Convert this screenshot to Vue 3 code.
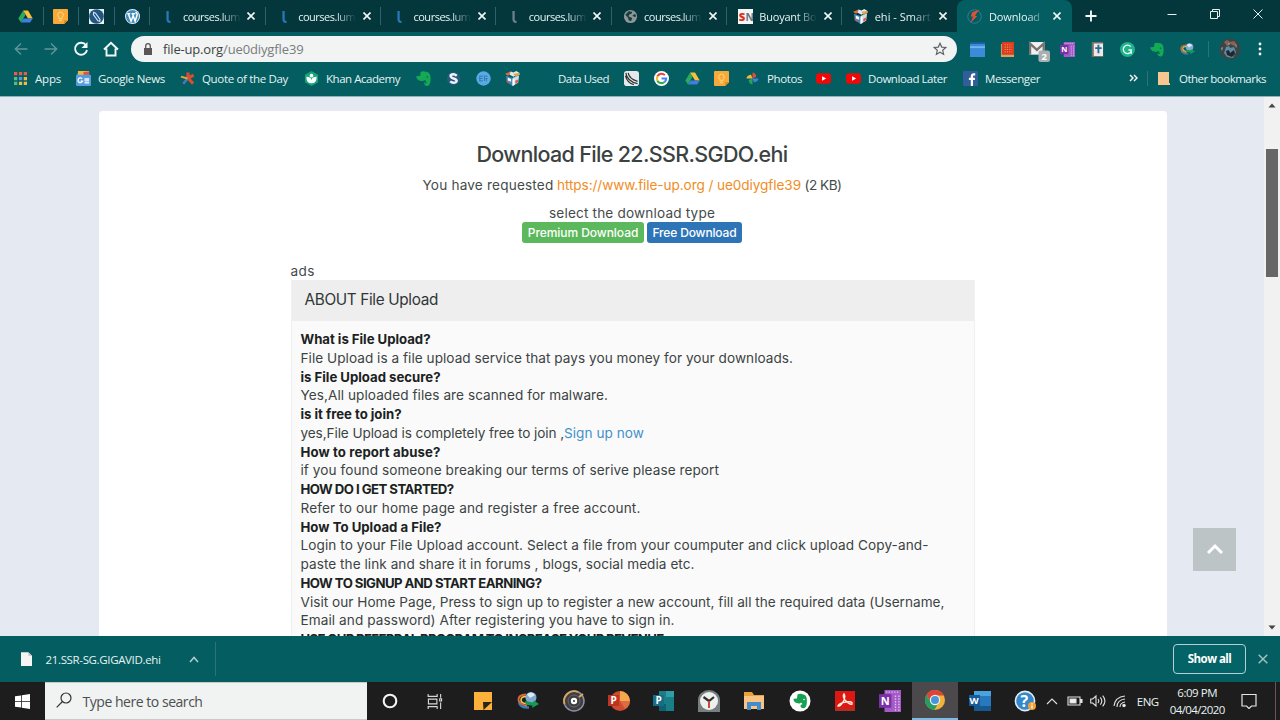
<script setup>
const pinnedTabs = ['drive', 'keep', 'pen', 'wordpress']

const tabs = [
   { icon: 'lumen', title: 'courses.lum', width: 57 },
   { icon: 'lumen', title: 'courses.lum', width: 57 },
   { icon: 'lumen', title: 'courses.lum', width: 57 },
   { icon: 'lumen-gray', title: 'courses.lum', width: 57 },
   { icon: 'globe', title: 'courses.lum', width: 57 },
   { icon: 'sn', title: 'Buoyant Bo', width: 57 },
   { icon: 'box', title: 'ehi - Smart', width: 56 },
   { icon: 'bolt', title: 'Download', width: 51, active: true },
]

const extensions = ['ext-window', 'ext-book', 'ext-mail', 'onenote', 'ext-bible', 'grammarly', 'evernote', 'idm']

const bookmarks = [
   { icon: 'apps', label: 'Apps', width: 26 },
   { icon: 'news', label: 'Google News', width: 67 },
   { icon: 'quote', label: 'Quote of the Day', width: 86 },
   { icon: 'khan', label: 'Khan Academy', width: 74 },
   { icon: 'evernote' },
   { icon: 'scribd' },
   { icon: 'chat' },
   { icon: 'box' },
   { label: 'Data Used', width: 51 },
   { icon: 'speed' },
   { icon: 'google' },
   { icon: 'drive' },
   { icon: 'keep' },
   { icon: 'photos', label: 'Photos', width: 35 },
   { icon: 'youtube' },
   { icon: 'youtube', label: 'Download Later', width: 79 },
   { icon: 'facebook', label: 'Messenger', width: 55 },
]

const aboutLines = [
   { text: 'What is File Upload?', width: 130, bold: true },
   { text: 'File Upload is a file upload service that pays you money for your downloads.', width: 492.5 },
   { text: 'is File Upload secure?', width: 140, bold: true },
   { text: 'Yes,All uploaded files are scanned for malware.', width: 307.5 },
   { text: 'is it free to join?', width: 101, bold: true },
   { text: 'yes,File Upload is completely free to join ,', width: 263.5, link: 'Sign up now', linkWidth: 80 },
   { text: 'How to report abuse?', width: 140, bold: true },
   { text: 'if you found someone breaking our terms of serive please report', width: 418.5 },
   { text: 'HOW DO I GET STARTED?', width: 153, bold: true },
   { text: 'Refer to our home page and register a free account.', width: 340 },
   { text: 'How To Upload a File?', width: 141, bold: true },
   { text: 'Login to your File Upload account. Select a file from your coumputer and click upload Copy-and-', width: 628 },
   { text: 'paste the link and share it in forums , blogs, social media etc.', width: 394 },
   { text: 'HOW TO SIGNUP AND START EARNING?', width: 241, bold: true },
   { text: 'Visit our Home Page, Press to sign up to register a new account, fill all the required data (Username,', width: 644 },
   { text: 'Email and password) After registering you have to sign in.', width: 374 },
   { text: 'USE OUR REFERRAL PROGRAM TO INCREASE YOUR REVENUE', width: 363, bold: true },
]

const taskApps = [
   'sticky', 'idm', 'disc', 'powerpoint', 'publisher', 'clock', 'explorer',
   'evernote-round', 'acrobat', 'onenote', 'chrome', 'word', 'help',
]

// Tracks the text out (or in) so the run takes exactly the given width
const vFit = {
   mounted(el, { value }) {
      if (!value) return
      const natural = el.getBoundingClientRect().width
      const count = el.textContent.length
      el.style.letterSpacing = `${(value - natural) / count}px`
   },
}
</script>

<template>
   <div class="screen">
      <svg class="sprite" aria-hidden="true">
         <symbol id="drive" viewBox="0 0 16 16">
            <path fill="#2bab5a" d="M5.500 1.500 8 6 3.200 14.500.3 10z" />
            <path fill="#fbc03a" d="M5.500 1.500h5.200l5 8.500h-5z" />
            <path fill="#3f7de0" d="M5.800 10h9.900L13 14.500H3.200z" />
         </symbol>
         <symbol id="keep" viewBox="0 0 16 16">
            <path fill="#f9a93a" d="M1 0h14a1 1 0 0 1 1 1v11l-4 4H1a1 1 0 0 1-1-1V1a1 1 0 0 1 1-1z" />
            <path fill="#d98519" d="M16 12l-4 4v-4z" />
            <path fill="none" stroke="#fde08a" d="M6.500 10.500V9a3 3 0 1 1 3 0v1.500zM6.500 12.500h3" />
         </symbol>
         <symbol id="pen" viewBox="0 0 16 16">
            <path fill="#e9f1f6" d="M0 0h16v16H0z" />
            <circle cx="8" cy="8" r="7.800" fill="#235582" />
            <path fill="none" stroke="#d4e5f0" stroke-width="1.200" d="M5 3.500 4.700 6l4.800 6.500 2 .5.200-2L7 4.500z" />
         </symbol>
         <symbol id="wordpress" viewBox="0 0 16 16">
            <circle cx="8" cy="8" r="8" fill="#e7f3fa" />
            <circle cx="8" cy="8" r="7" fill="#3f8fc0" />
            <path fill="none" stroke="#fff" stroke-width="1.600" d="M2.500 5h3M7 5h4M3.500 5l3 8L9 6.500M8 5l2.800 8L13 6c0-1.500-1-2-1.500-3" />
         </symbol>
         <symbol id="lumen" viewBox="0 0 16 16">
            <path fill="none" stroke="#2979b8" stroke-width="2.400" d="M7 2v9q0 3 3.200 2.600" />
         </symbol>
         <symbol id="lumen-gray" viewBox="0 0 16 16">
            <path fill="none" stroke="#6f8189" stroke-width="2.400" d="M7 2v9q0 3 3.200 2.600" />
         </symbol>
         <symbol id="globe" viewBox="0 0 16 16">
            <circle cx="8" cy="8" r="7" fill="#8f9899" />
            <path fill="#173f42" d="M2.500 6 6 2.500l4 .5-1 2-2.500 1-.5 2 4 1.500L8.500 13 6 12l-.5-2.500zM10 7l3-2 1 3-2 .5z" />
         </symbol>
         <symbol id="sn" viewBox="0 0 16 16">
            <path fill="#f6f6f6" d="M0 0h16v16H0z" />
            <text x="0.800" y="12.500" font-family="Open Sans, sans-serif" font-size="12" font-weight="800" fill="#d93222">S</text>
            <text x="8" y="12.500" font-family="Open Sans, sans-serif" font-size="11" font-weight="700" fill="#667784" textLength="7.500">N</text>
         </symbol>
         <symbol id="box" viewBox="0 0 16 16">
            <path fill="#e36a3c" d="m0 3 6-2.500L9 2 3 5z" />
            <path fill="#dcebf5" d="m6 .5 3 1 3-1.500 4 2.500L9 6 5 4z" />
            <path fill="#3f86bd" d="m1 5 7 2.500V16l-6-4z" />
            <path fill="#c9dfee" d="m8 7.500 7-3-1 8L8 16z" />
            <path fill="#e8a04a" d="m9 3 6-1 1 2-5 2z" />
            <path fill="#e0593a" d="m1.500 10 3 1.500v2L2 12zM11 10.500l3-1.500-.3 3-2.700 1.500z" />
            <path fill="#fff" d="m3 7 3.500 1.500v3L3 10zM8 9l2-1v7l-2 1z" />
         </symbol>
         <symbol id="bolt" viewBox="0 0 16 16">
            <circle cx="8" cy="8" r="7.200" fill="none" stroke="#397c9c" />
            <path fill="#dc5236" d="M13.500.5 5.500 3.500 4 8h2.500L3.500 15 11 7.500H8.500L10.500 4z" />
         </symbol>
         <symbol id="ext-window" viewBox="0 0 16 16">
            <path fill="#3b8bd8" d="M0 0h16v16H0z" />
            <path fill="#1e5a9b" d="M0 0h16v2H0z" />
            <path fill="#70b6ed" d="M0 4.500h16v2H0z" />
         </symbol>
         <symbol id="ext-book" viewBox="0 0 16 16">
            <path fill="#db3c23" d="M2 0h13v14H2z" />
            <path fill="#d5a75c" d="M2 13.500h13V16H1V2h1z" />
            <path stroke="#f7b553" stroke-dasharray="1 1.500" d="M5 3h8M5 5.500h8M5 8h8M5 10.500h8" />
         </symbol>
         <symbol id="ext-mail" viewBox="0 0 20 20">
            <path fill="#f1f1f1" d="M0 1h15v12H0z" />
            <path fill="none" stroke="#77736f" stroke-width="2.200" d="M1 13V2.500l6.500 6 6.500-6V13" />
            <rect x="9" y="9" width="11" height="11" rx="2" fill="#a9b0b2" />
            <text x="12" y="18" font-family="Open Sans, sans-serif" font-size="9" font-weight="700" fill="#fff">2</text>
         </symbol>
         <symbol id="onenote" viewBox="0 0 16 16">
            <path fill="#a35cc6" d="M4 0h12v16H4z" />
            <path stroke="#e6bbf1" stroke-dasharray="1 1" d="M5 1.500h10M12 4v11M14.500 4v11" />
            <path fill="#7932a6" d="M0 3h9v10H0z" />
            <text x="1.300" y="11" font-family="Open Sans, sans-serif" font-size="8" font-weight="700" fill="#fff">N</text>
         </symbol>
         <symbol id="ext-bible" viewBox="0 0 14 16">
            <path fill="#eee9e2" d="M1 1h12v15H1z" />
            <path fill="#7d6e69" d="M1 0h12v1.500H3V15h10v1H1z" />
            <path fill="none" stroke="#27689d" stroke-width="2" d="M8 3v9M4.500 6.500h7" />
         </symbol>
         <symbol id="grammarly" viewBox="0 0 16 16">
            <circle cx="8" cy="8" r="8" fill="#1fb28b" />
            <path fill="none" stroke="#e9fff8" stroke-width="1.400" d="M11.500 5A4.500 4.500 0 1 0 12 10V8.500H9M12 8.500v4" />
         </symbol>
         <symbol id="evernote" viewBox="0 0 16 16">
            <path fill="#14a954" d="M5 1c2-1.300 4-.8 5.500-.3C14 1 15.200 3 15.500 7c.3 5-.8 9-3.500 9-4 0-4.500-4.500-1-4.500-1-2-2.300-2-3.500-.8C4 11 .5 9.500.3 5.500L4.500 5z" />
            <path fill="none" stroke="#075d50" stroke-width=".9" d="M9.500 13.500q0-1.300 2-1.200" />
            <circle cx="12" cy="6.500" r=".8" fill="#075d50" />
         </symbol>
         <symbol id="idm" viewBox="0 0 22 18">
            <circle cx="14" cy="5.500" r="5.500" fill="#82a9d4" />
            <path fill="#d9ecf5" d="M10 2.500q4-4 8 .5l-5 3z" />
            <path fill="none" stroke="#367bc0" stroke-width="2.400" d="M2 10q1 6 10 5.500" />
            <path fill="none" stroke="#d9683a" stroke-width="2" d="M9 2.500Q1 3 1.500 8q.5 4 8.500 6" />
            <path fill="none" stroke="#e8ce55" stroke-width="1.600" d="M9 4.500Q4 4.500 4 8t7 4" />
            <path fill="#169b54" d="m8 9 8 1.500 1-2 5 3.500-7 4 .5-2.500L9 13z" />
         </symbol>
         <symbol id="apps" viewBox="0 0 14 14">
            <path fill="#e95c4a" d="M0 0h3.500v3.500H0zM5.300 0h3.500v3.500H5.300zM10.500 0H14v3.500h-3.500z" />
            <path fill="#60b782" d="M0 5.300h3.500v3.500H0zM0 10.500h3.500V14H0z" />
            <path fill="#4e9ae0" d="M5.300 5.300h3.500v3.500H5.300z" />
            <path fill="#efb948" d="M10.500 5.300H14v3.500h-3.500zM5.300 10.500h3.500V14H5.300zM10.500 10.500H14V14h-3.500z" />
         </symbol>
         <symbol id="news" viewBox="0 0 16 16">
            <path fill="#29a567" d="M1 3 13 0v6H1z" />
            <path fill="#f4b63f" d="M2 0h12v5H2z" />
            <path fill="#e25440" d="m8 1 6-.5V5H8z" />
            <rect y="4" width="16" height="12" rx="1" fill="#559ce2" />
            <path fill="none" stroke="#fff" stroke-width="1.400" d="M6.500 8.200a2.500 2.500 0 1 0 .5 2.500H5M9 8.500h5M9 10.500h5M9 12.700h5" />
         </symbol>
         <symbol id="quote" viewBox="0 0 16 16">
            <path stroke="#d94e31" stroke-width="3.400" d="M8.500 8V1.500M8 8l6.500-3.500M9 8l5 5.500" />
            <path stroke="#4f78b8" stroke-width="2.600" d="m8 8-4.500 5.500" />
            <path stroke="#e4a43f" stroke-width="2.200" d="M8 8 1 6" />
         </symbol>
         <symbol id="khan" viewBox="0 0 16 16">
            <path fill="#14a579" d="m8 0 7 4v8l-7 4-7-4V4z" />
            <circle cx="8" cy="5" r="2" fill="#fff" />
            <path fill="#fff" d="M2.500 6q5.500 0 5.500 4 0-4 5.500-4 0 7-5.500 7T2.500 6z" />
         </symbol>
         <symbol id="scribd" viewBox="0 0 16 16">
            <circle cx="8" cy="8" r="7" fill="#2a587e" />
            <path fill="none" stroke="#eef4f6" stroke-width="2.600" d="M11.500 5Q9 3 6.500 3.700C4 4.500 4.500 7 8 8s4.500 3 2 4.200q-3 .9-5.500-1.200" />
         </symbol>
         <symbol id="chat" viewBox="0 0 16 16">
            <circle cx="8" cy="8" r="7.700" fill="#5ba9e3" />
            <path fill="none" stroke="#2d78b2" d="M4 5.500h3.500M4 8h3M4 10.500h3.500M4 5v6M9 5.500h3.500M9 10.500V5M11 8v3M12.500 8H10" />
         </symbol>
         <symbol id="speed" viewBox="0 0 16 16">
            <rect width="16" height="16" rx="3" fill="#e7e9e9" />
            <path fill="none" stroke="#2d3438" stroke-width="1.300" d="M2 2q1 9 12.500 11.500M4.500 2q1 6.500 10 9M1.500 5q2 8 9 9.500" />
         </symbol>
         <symbol id="google" viewBox="0 0 16 16">
            <circle cx="8" cy="8" r="8" fill="#fff" />
            <g fill="none" stroke-width="2.200">
               <path stroke="#e74436" d="M11.600 4.400A5 5 0 0 0 3.600 5.700" />
               <path stroke="#f7b924" d="M3.600 5.700a5 5 0 0 0 0 4.600" />
               <path stroke="#34a853" d="M3.600 10.300a5 5 0 0 0 7.600 1.500" />
               <path stroke="#4285f4" d="M11.200 11.800A5 5 0 0 0 13 8H8" />
            </g>
         </symbol>
         <symbol id="photos" viewBox="0 0 16 16">
            <path fill="#e24d3c" d="M8 8V1.500q4 1 4 4.500z" />
            <path fill="#3c86d7" d="M8 8h6.500q-1 4-5 4z" />
            <path fill="#29a35c" d="M8 8v6.500q-4-1-4-5z" />
            <path fill="#f1b840" d="M8 8H1.500q1-4 5-4z" />
         </symbol>
         <symbol id="youtube" viewBox="0 0 16 16">
            <rect y="2.500" width="16" height="11" rx="3" fill="#f00808" />
            <path fill="#fff" d="m6.500 5.500 4.300 2.500-4.300 2.500z" />
         </symbol>
         <symbol id="facebook" viewBox="0 0 16 16">
            <rect width="16" height="16" rx="1" fill="#315d9b" />
            <path fill="none" stroke="#fff" stroke-width="2.400" d="M13 3.500h-1.500q-2 0-2 2V16M6.300 8.500h6.400" />
         </symbol>
         <symbol id="sticky" viewBox="0 0 22 22">
            <path fill="#fbb13a" d="M2 2h18v18H2z" />
            <path fill="#292519" d="M11 12h9l-8.500 8z" />
         </symbol>
         <symbol id="disc" viewBox="0 0 22 22">
            <circle cx="11" cy="11" r="10" fill="#3e3e41" stroke="#8f90a6" stroke-width="1.500" />
            <path fill="none" stroke="#d8a35c" stroke-width="1.800" d="M1.500 14A10 10 0 0 1 15 2" />
            <circle cx="11" cy="11" r="6" fill="none" stroke="#6a6566" />
            <circle cx="11" cy="11" r="3.200" fill="#fff" />
            <circle cx="11" cy="11" r="1" fill="#333" />
            <path stroke="#e4a75a" stroke-width="2" d="m16 7 4-3" />
         </symbol>
         <symbol id="powerpoint" viewBox="0 0 22 22">
            <circle cx="12" cy="11" r="10" fill="#cf4a2e" />
            <path fill="#f6a94c" d="M12 1a10 10 0 0 1 10 10H12z" />
            <path fill="#de6c42" d="M12 11h10a10 10 0 0 1-5 8z" />
            <rect y="5" width="11" height="11" fill="#bd3423" />
            <text x="2.500" y="14" font-family="Open Sans, sans-serif" font-size="10" font-weight="700" fill="#fff">P</text>
         </symbol>
         <symbol id="publisher" viewBox="0 0 22 22">
            <path fill="#187f87" d="M6 1h15v20H6z" />
            <path fill="#2f9ea6" d="M13 1h8v6h-8z" />
            <path fill="#0c6270" d="M6 14h7v7H6z" />
            <rect y="5" width="11" height="11" fill="#176c88" />
            <text x="2.500" y="14" font-family="Open Sans, sans-serif" font-size="10" font-weight="700" fill="#fff">P</text>
         </symbol>
         <symbol id="clock" viewBox="0 0 22 22">
            <path fill="#777f80" d="M0 22V10a11 10 0 0 1 22 0v12z" />
            <circle cx="11" cy="11" r="9" fill="#eef0ee" />
            <path fill="none" stroke="#30302e" stroke-width="2.200" d="m5.500 7 5.500 4 5-4" />
            <path stroke="#c64b32" stroke-width="2" d="M11 11v7" />
         </symbol>
         <symbol id="explorer" viewBox="0 0 22 22">
            <path fill="#e8a23b" d="M1 2h8l2 3h10v14H1z" />
            <path fill="#f8c383" d="M1 6h20v13H1z" />
            <path fill="#418dcc" d="M4 12h14v8h-4v-4H8v4H4z" />
         </symbol>
         <symbol id="evernote-round" viewBox="0 0 22 22">
            <circle cx="11" cy="11" r="10.500" fill="#fff" />
            <path fill="#14a150" d="M8.500 4.500c2-1 3.500-.8 5-.3 3 .3 4 2 4.300 5 .4 5-.6 9-3.300 9-3.500 0-4-4-1-4-.8-1.700-2-1.600-3-.8-3 .2-6-1-6-4.600L8 8.500z" />
            <circle cx="15" cy="9.500" r=".8" fill="#fff" />
         </symbol>
         <symbol id="acrobat" viewBox="0 0 22 22">
            <path fill="#df1713" d="M1 1h20v20H1z" />
            <path fill="#b92a21" d="M1 18h20v3H1z" />
            <path fill="none" stroke="#fff1df" stroke-width="1.400" d="M10 4q2 3-1 8t-5 4q1-3 8-4t6 2q-2 1-6-3T10 4z" />
         </symbol>
         <symbol id="chrome" viewBox="0 0 22 22">
            <circle cx="11" cy="11" r="10" fill="#f0b23c" />
            <path fill="#dc4437" d="M2.300 6A10 10 0 0 1 20 6.500h-9L7 13z" />
            <path fill="#259c61" d="M2.300 6a10 10 0 0 0 8 15l4.700-8-7.500 1z" />
            <circle cx="11" cy="11" r="5.200" fill="#f4efe7" />
            <circle cx="11" cy="11" r="4" fill="#4995dd" />
         </symbol>
         <symbol id="word" viewBox="0 0 22 22">
            <path fill="#2878bd" d="M5 1h17v20H5z" />
            <path fill="#4ba3dc" d="M5 1h17v5H5z" />
            <path fill="#17588f" d="M5 16h17v5H5z" />
            <rect y="5" width="11" height="11" fill="#165b9d" />
            <text x="0.500" y="14" font-family="Open Sans, sans-serif" font-size="9.500" font-weight="700" fill="#fff">W</text>
         </symbol>
         <symbol id="help" viewBox="0 0 22 22">
            <circle cx="11" cy="11" r="9.600" fill="#3489cc" stroke="#e4edf2" stroke-width="1.600" />
            <text x="6.500" y="17" font-family="Open Sans, sans-serif" font-size="16" font-weight="700" fill="#fff">?</text>
            <circle cx="18" cy="16" r="4" fill="#f1a237" />
            <path stroke="#fff" stroke-width="1.300" d="M18 15.500v3M18 13.300v1.200" />
         </symbol>
      </svg>

      <!-- tab strip -->
      <div class="tab-strip">
         <div v-for="icon in pinnedTabs" :key="icon" class="pinned-tab">
            <svg class="icon"><use :href="`#${icon}`" /></svg>
         </div>
         <div v-for="(tab, i) in tabs" :key="i" class="tab" :class="{ active: tab.active, last: i === 6 }">
            <svg class="icon"><use :href="`#${tab.icon}`" /></svg>
            <span class="tab-title"><span v-fit="tab.width" class="fit">{{ tab.title }}</span></span>
            <svg class="close" viewBox="0 0 8 8"><path d="m.5.5 7 7m0-7-7 7" /></svg>
         </div>
         <svg class="new-tab" viewBox="0 0 12 12"><path d="M6 .5v11M.5 6h11" /></svg>
         <div class="window-controls">
            <svg viewBox="0 0 12 12"><path d="M1.500 6.500h9" /></svg>
            <svg viewBox="0 0 12 12"><path d="M1.500 3.500h7v7h-7zM3.500 3.500v-2h7v7h-2" /></svg>
            <svg viewBox="0 0 12 12"><path d="m1.500 1.500 9 9m0-9-9 9" /></svg>
         </div>
      </div>

      <!-- address row -->
      <div class="toolbar">
         <div class="nav">
            <svg class="dim" viewBox="0 0 16 16"><path d="M14.500 8H2m6-5.500L2.300 8 8 13.500" /></svg>
            <svg class="dim" viewBox="0 0 16 16"><path d="M1.500 8H14M8 2.500 13.700 8 8 13.500" /></svg>
            <svg viewBox="0 0 16 16"><path d="M13 4.300A6 6 0 1 0 14 9" /><path class="solid" d="M14.500 1v6h-6z" /></svg>
            <svg viewBox="0 0 16 16"><path d="M1 8.500 8 1.800l7 6.700M3.500 7.500v7h9v-7" /></svg>
         </div>
         <div class="address">
            <svg class="lock" viewBox="0 0 8 12"><path d="M0 5h8v7H0z" /><path class="shackle" d="M1.700 5V3a2.300 2.300 0 0 1 4.600 0v2" /></svg>
            <span class="url"><span v-fit="60" class="fit">file-up.org</span><span v-fit="80.500" class="fit url-path">/ue0diygfle39</span></span>
            <svg class="star" viewBox="0 0 14 14"><path d="m7 1.300 1.700 3.800 4.100.4-3.100 2.800.9 4.100L7 10.300l-3.600 2.100.9-4.100-3.100-2.800 4.100-.4z" /></svg>
         </div>
         <div class="extensions">
            <svg v-for="icon in extensions" :key="icon" :class="icon"><use :href="`#${icon}`" /></svg>
         </div>
         <div class="profile">
            <svg class="avatar" viewBox="0 0 22 22">
               <circle cx="11" cy="11" r="10.500" fill="#3c4546" />
               <path fill="#8a6358" d="m5 4 3-2 3 2 4-1 3 4-3 1-3-2-4 2z" />
               <path fill="#5d8ca5" d="m7 9 3-1 1 2 4-1 2 5-3 6-6-1-3-4z" />
               <path fill="#20272b" d="m7 13 3-1 1 3 4-3 1 4-3 3-5-2z" />
               <path fill="#9aa19f" d="m2 10 2-1-1 4zM16 6l2 2-1 2zM9 5l2 1-2 1z" />
            </svg>
         </div>
         <svg class="menu-dots" viewBox="0 0 4 14"><circle cx="2" cy="2" r="1.400" /><circle cx="2" cy="7" r="1.400" /><circle cx="2" cy="12" r="1.400" /></svg>
      </div>

      <!-- bookmarks -->
      <div class="bookmarks">
         <div v-for="(mark, i) in bookmarks" :key="i" class="bookmark">
            <svg v-if="mark.icon" class="icon"><use :href="`#${mark.icon}`" /></svg>
            <span v-if="mark.label" v-fit="mark.width" class="fit">{{ mark.label }}</span>
         </div>
         <svg class="overflow" viewBox="0 0 9 8"><path d="m1 1 3 3-3 3m4-6 3 3-3 3" /></svg>
         <div class="other">
            <svg class="folder" viewBox="0 0 12 13"><path d="M0 0h11v11h1v2H0z" /></svg>
            <span v-fit="87" class="fit">Other bookmarks</span>
         </div>
      </div>

      <!-- web page -->
      <div class="viewport">
         <div class="page">
            <div class="card">
               <h1><span v-fit="311" class="fit">Download File 22.SSR.SGDO.ehi</span></h1>
               <p class="requested">
                  <span v-fit="131" class="fit">You have requested</span>
                  <span v-fit="244" class="fit file-link">https://www.file-up.org / ue0diygfle39</span>
                  <span v-fit="37" class="fit">(2 KB)</span>
               </p>
               <p class="choose"><span v-fit="166" class="fit">select the download type</span></p>
               <div class="buttons">
                  <button class="premium"><span v-fit="110.500" class="fit">Premium Download</span></button>
                  <button class="free"><span v-fit="84" class="fit">Free Download</span></button>
               </div>
               <div class="about">
                  <div class="ads"><span v-fit="24.500" class="fit">ads</span></div>
                  <div class="panel">
                     <div class="panel-head"><span v-fit="133.500" class="fit">ABOUT File Upload</span></div>
                     <div class="panel-body">
                        <div v-for="line in aboutLines" :key="line.text" class="line" :class="{ bold: line.bold }">
                           <span v-fit="line.width" class="fit">{{ line.text }}</span>
                           <a v-if="line.link" v-fit="line.linkWidth" class="fit">{{ line.link }}</a>
                        </div>
                     </div>
                  </div>
               </div>
            </div>
            <div class="to-top">
               <svg viewBox="0 0 18 12"><path d="m2 10 7-7 7 7" /></svg>
            </div>
         </div>
         <div class="scrollbar">
            <svg viewBox="0 0 8 5"><path d="M4 0.500 7.500 4.500h-7z" /></svg>
            <div class="thumb"></div>
            <svg class="down" viewBox="0 0 8 5"><path d="M.5.500h7L4 4.500z" /></svg>
         </div>
      </div>

      <!-- download shelf -->
      <div class="shelf">
         <div class="download">
            <svg class="file" viewBox="0 0 12 15"><path d="M0 0h8l4 4v11H0z" /><path class="fold" d="M8 0v4h4" /></svg>
            <span v-fit="115" class="fit">21.SSR-SG.GIGAVID.ehi</span>
            <svg class="chevron" viewBox="0 0 10 7"><path d="m1 6 4-4.500L9 6" /></svg>
         </div>
         <button class="show-all"><span v-fit="43.500" class="fit">Show all</span></button>
         <svg class="shelf-close" viewBox="0 0 10 10"><path d="m.7.700 8.600 8.600m0-8.600L.7 9.300" /></svg>
      </div>

      <!-- taskbar -->
      <div class="taskbar">
         <div class="start">
            <svg viewBox="0 0 16 16"><path d="m0 2.500 6.500-1v6H0zM7.300 1.300 16 0v7.500H7.300zM0 8.300h6.500v6.200L0 13.600zM7.300 8.300H16V16l-8.700-1.300z" /></svg>
         </div>
         <div class="search">
            <svg viewBox="0 0 16 16"><circle cx="10" cy="6" r="5" /><path d="M6.500 9.500.7 15.300" /></svg>
            <span v-fit="120" class="fit">Type here to search</span>
         </div>
         <div class="task"><svg class="cortana" viewBox="0 0 16 16"><circle cx="8" cy="8" r="6.300" /></svg></div>
         <div class="task">
            <svg class="task-view" viewBox="0 0 16 16"><path d="M.7 0v2.500h9.600V0M.7 16v-2.500h9.600V16M1 5.500h9v5H1zM14 0v4M14 9v7M13 5h2v2.500h-2z" /></svg>
         </div>
         <div class="apps">
            <div v-for="app in taskApps" :key="app" class="app" :class="{ running: app === 'chrome' }">
               <svg :class="app"><use :href="`#${app}`" /></svg>
            </div>
         </div>
         <div class="tray">
            <svg viewBox="0 0 16 16"><path d="m3 11 5-5 5 5" /></svg>
            <svg viewBox="0 0 16 16"><path d="M1 4h12v8H1zM14 6.500h1v3h-1z" /><path class="solid" d="M3 6h6v4H3z" /></svg>
            <svg viewBox="0 0 16 16"><path d="M.7 6h2L6 3v10l-3.300-3h-2zM8 6q1.500 2 0 4M10.300 4.300q3 3.700 0 7.400M12.700 2.700q4.500 5.300 0 10.600" /></svg>
            <svg viewBox="0 0 16 16"><path d="M2 13Q3 4 13 3M5 14q0-7 8-8M8 14q0-4 5-5" /><circle class="solid" cx="12" cy="12.500" r="1.200" /></svg>
         </div>
         <span v-fit="22" class="fit lang">ENG</span>
         <div class="time">
            <span v-fit="40" class="fit">6:09 PM</span>
            <span v-fit="55" class="fit">04/04/2020</span>
         </div>
         <svg class="notify" viewBox="0 0 16 16"><path d="M1 1.500h14V13h-4.500L8 15.500 5.500 13H1z" /></svg>
         <div class="peek"></div>
      </div>
   </div>
</template>

<style>
body {
   margin: 0;
   overflow: hidden;
}
</style>

<style scoped>
.screen {
   width: 1280px;
   height: 720px;
   display: flex;
   flex-direction: column;
   overflow: hidden;
   background: #035d61;
   color: #e8f3f3;
   font-family: "Open Sans", "Noto Sans", sans-serif;
   font-size: 11.5px;
}

.screen * {
   box-sizing: border-box;
}

.sprite {
   display: none;
}

svg {
   display: block;
   flex: none;
}

.fit {
   display: inline-block;
   white-space: pre;
}

.icon {
   width: 15px;
   height: 15px;
}

/* ── Tab strip ── */
.tab-strip {
   height: 32px;
   flex: none;
   display: flex;
   align-items: center;
   padding-left: 8px;
   background: #04373c;
   font-size: 11px;
}

.pinned-tab {
   width: 35.6px;
   height: 18px;
   display: flex;
   align-items: center;
   justify-content: center;
   border-right: 1px solid #2b6470;
}

.tab {
   width: 115.3px;
   height: 18px;
   flex: none;
   display: flex;
   align-items: center;
   padding-left: 11px;
   border-right: 1px solid #2b6470;
}

.tab.last {
   border-right: 0;
}

.tab.active {
   height: 32px;
   width: 114.3px;
   padding-left: 10px;
   border-right: 0;
   border-radius: 8px 8px 0 0;
   background: #035d61;
}

.tab-title {
   width: 58px;
   margin-left: 6.5px;
   overflow: hidden;
   -webkit-mask-image: linear-gradient(90deg, #000 65%, transparent);
   mask-image: linear-gradient(90deg, #000 65%, transparent);
}

.close {
   width: 8px;
   height: 8px;
   margin-left: 6.5px;
   stroke: #f3f9f9;
   stroke-width: 1.6;
}

.new-tab {
   width: 12px;
   height: 12px;
   margin-left: 13.5px;
   stroke: #fff;
   stroke-width: 1.8;
}

.window-controls {
   display: flex;
   gap: 31px;
   margin: -5px 0 0 69px;
}

.window-controls svg {
   width: 12px;
   height: 12px;
   fill: none;
   stroke: #e8f0f0;
}

/* ── Toolbar ── */
.toolbar {
   height: 34px;
   flex: none;
   display: flex;
   align-items: center;
}

.nav {
   width: 131px;
   display: flex;
   gap: 14px;
   padding-left: 12.5px;
}

.nav svg {
   width: 16px;
   height: 16px;
   fill: none;
   stroke: #f3fafa;
   stroke-width: 1.9;
}

.nav .dim {
   stroke: #629598;
   stroke-width: 1.4;
}

.nav .solid {
   fill: #f3fafa;
   stroke: none;
}

.address {
   width: 826px;
   height: 26px;
   display: flex;
   align-items: center;
   padding: 0 10px 0 13px;
   border-radius: 13px;
   background: #f2f3f3;
   color: #3c4344;
   font-size: 13px;
}

.lock {
   width: 8px;
   height: 12px;
   fill: #5b5557;
}

.shackle {
   fill: none;
   stroke: #5b5557;
   stroke-width: 1.3;
}

.url {
   display: flex;
   flex: 1;
   margin-left: 11px;
}

.url-path {
   color: #777d7d;
}

.star {
   width: 14px;
   height: 14px;
   fill: none;
   stroke: #5d6466;
   stroke-width: 1.2;
}

.extensions {
   width: 251px;
   display: grid;
   grid-template-columns: repeat(8, 30px);
   align-items: center;
   justify-items: center;
   padding-left: 5px;
}

.extensions svg {
   width: 15px;
   height: 15px;
}

.extensions .ext-mail {
   width: 21px;
   height: 21px;
   margin: 5px 0 0 5px;
}

.extensions .ext-bible {
   width: 13px;
}

.extensions .evernote {
   width: 14px;
}

.profile {
   height: 16px;
   display: flex;
   align-items: center;
   padding-left: 10px;
   border-left: 1px solid #2b7376;
}

.avatar {
   width: 22px;
   height: 22px;
}

.menu-dots {
   width: 4px;
   height: 14px;
   margin-left: 17px;
   fill: #fff;
}

/* ── Bookmarks ── */
.bookmarks {
   height: 31px;
   flex: none;
   display: grid;
   grid-template-columns: 62px 104px 124px 112px 30px 30px 29px 53px 66px 30px 31px 29px 31px 71px 30px 117px 166px 18px 1fr;
   align-items: center;
   padding: 0 0 6px 14px;
   border-bottom: 1px solid #8db4b9;
}

.bookmark {
   display: flex;
   align-items: center;
   gap: 7px;
}

.bookmark:first-child .icon {
   width: 13px;
   height: 13px;
   margin-right: 1px;
}

.overflow {
   width: 9px;
   height: 8px;
   fill: none;
   stroke: #fff;
   stroke-width: 1.4;
}

.other {
   display: flex;
   align-items: center;
   gap: 9px;
   padding-left: 10px;
   border-left: 1px solid #2b7376;
}

.folder {
   width: 12px;
   height: 13px;
   fill: #f8c68e;
}

/* ── Page ── */
.viewport {
   height: 539px;
   flex: none;
   display: flex;
   overflow: hidden;
}

.page {
   position: relative;
   width: 1264px;
   height: 539px;
   overflow: hidden;
   padding: 14px 97.5px 0 98.5px;
   background: #e5e9f2;
   color: #444b4b;
   font-family: Inter, Lato, sans-serif;
   font-size: 13.6px;
}

.card {
   height: 600px;
   border-radius: 4px 4px 0 0;
   background: #fff;
   padding: 28px 1px 0 0;
}

h1 {
   margin: 0;
   color: #3c4242;
   font-size: 21.5px;
   font-weight: 500;
   line-height: 30px;
   text-align: center;
}

.requested {
   display: flex;
   justify-content: center;
   gap: 3.5px;
   margin: 5.5px 0 0;
   line-height: 20px;
}

.file-link {
   color: #f08d24;
}

.choose {
   margin: 8px 0 0;
   line-height: 20px;
   text-align: center;
}

.buttons {
   display: flex;
   justify-content: center;
   gap: 3px;
   margin-top: -.5px;
}

.buttons button {
   height: 21px;
   padding: 0;
   border: 0;
   border-radius: 3px;
   color: #fff;
   font: 500 12px/20px Inter, Lato, sans-serif;
}

.premium {
   width: 122px;
   background: #5cb85c;
}

.free {
   width: 95px;
   background: #2e75b8;
}

.about {
   width: 684px;
   margin: 18px 0 0 192px;
}

.ads {
   height: 19px;
   line-height: 20px;
}

.panel {
   border: 1px solid #f0f0f0;
   border-top: 0;
   background: #fafafa;
}

.panel-head {
   height: 41px;
   padding-left: 13px;
   background: #eee;
   color: #303636;
   font-size: 15.3px;
   line-height: 39px;
}

.panel-body {
   padding: 9px 9px 0;
   color: #3c4343;
}

.line {
   display: flex;
   height: 18.75px;
   line-height: 18.75px;
}

.line.bold {
   color: #1b2222;
   font-size: 13.2px;
   font-weight: 700;
}

.line a {
   color: #4291ca;
}

.to-top {
   position: absolute;
   right: 28px;
   bottom: 65px;
   width: 43px;
   height: 43px;
   display: flex;
   align-items: center;
   justify-content: center;
   padding-bottom: 2px;
   background: #bcc4c6;
}

.to-top svg {
   width: 18px;
   height: 12px;
   fill: none;
   stroke: #fff;
   stroke-width: 3;
}

.scrollbar {
   width: 16px;
   display: flex;
   flex-direction: column;
   align-items: center;
   padding: 6px 0;
   background: #f1f1f1;
}

.scrollbar svg {
   width: 8px;
   height: 5px;
   fill: #444;
}

.thumb {
   width: 12px;
   height: 128px;
   margin-top: 41px;
   background: #676767;
}

.scrollbar .down {
   margin-top: auto;
}

/* ── Download shelf ── */
.shelf {
   height: 46px;
   flex: none;
   display: flex;
   align-items: center;
}

.download {
   width: 216px;
   height: 34px;
   display: flex;
   align-items: center;
   padding-left: 21px;
   border-right: 1px solid #277577;
}

.file {
   width: 11px;
   height: 14px;
   margin-right: 13.5px;
   fill: #f5f5f5;
}

.fold {
   fill: #bcc6c8;
}

.chevron {
   width: 10px;
   height: 7px;
   margin-left: 28px;
   fill: none;
   stroke: #b4cfcf;
   stroke-width: 1.5;
}

.show-all {
   width: 73px;
   height: 30px;
   margin-left: auto;
   padding: 0;
   border: 1px solid #b3d0da;
   border-radius: 4px;
   background: #036366;
   color: #fff;
   font: 700 11.5px/26px "Open Sans", sans-serif;
}

.shelf-close {
   width: 10px;
   height: 10px;
   margin: 0 12px;
   stroke: #9fc0bd;
   stroke-width: 1.5;
}

/* ── Taskbar ── */
.taskbar {
   height: 38px;
   flex: none;
   display: flex;
   align-items: center;
   background: #1d1d1d;
}

.start {
   width: 45px;
   padding-left: 15px;
}

.start svg {
   width: 15px;
   height: 15px;
   fill: #fff;
}

.search {
   width: 322px;
   height: 38px;
   display: flex;
   align-items: center;
   gap: 10.5px;
   padding-left: 11px;
   border: 1px solid #c8cbca;
   border-width: 1px 0;
   background: #f1f2f2;
   color: #4b4f50;
   font-size: 14px;
}

.search svg {
   width: 16px;
   height: 16px;
   margin-top: -2px;
   fill: none;
   stroke: #333;
   stroke-width: 1.2;
}

.task {
   width: 45px;
   display: flex;
   justify-content: center;
}

.cortana {
   width: 16px;
   height: 16px;
   fill: none;
   stroke: #f4f4f4;
   stroke-width: 2.1;
}

.task-view {
   width: 16px;
   height: 15px;
   fill: none;
   stroke: #d8d8d8;
   stroke-width: 1.2;
}

.apps {
   display: grid;
   grid-template-columns: 45.8px repeat(12, 45.2px);
   height: 38px;
   margin-left: 3px;
}

.app {
   display: flex;
   align-items: center;
   justify-content: center;
}

.app svg {
   width: 22px;
   height: 22px;
}

.app.running {
   border-bottom: 2px solid #79bce6;
   background: #4b494b;
}

.tray {
   display: grid;
   grid-template-columns: repeat(4, 22.8px);
   justify-items: center;
   margin-left: -7.5px;
}

.tray svg {
   width: 16px;
   height: 16px;
   fill: none;
   stroke: #e1e1e1;
   stroke-width: 1.1;
}

.tray .solid {
   fill: #f1f1f1;
}

.lang {
   margin-left: 5px;
}

.time {
   width: 56px;
   display: flex;
   flex-direction: column;
   align-items: center;
   margin-left: 10.5px;
   line-height: 17px;
}

.notify {
   width: 16px;
   height: 16px;
   margin-left: 16px;
   fill: none;
   stroke: #e5e5e5;
   stroke-width: 1.2;
}

.peek {
   width: 1px;
   height: 38px;
   margin-left: 18px;
   background: #6a5354;
}
</style>
